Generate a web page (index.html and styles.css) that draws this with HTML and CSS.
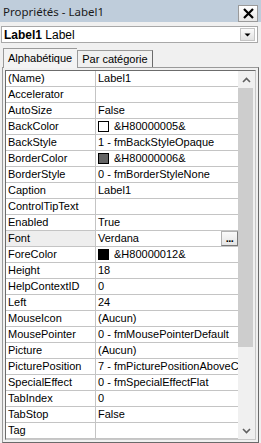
FILE: index.html
```html
<!DOCTYPE html>
<html>
<head>
<meta charset="utf-8">
<link rel="stylesheet" href="styles.css">
</head>
<body>
<div class="titlebar">
  <span class="title">Propriétés - Label1</span>
  <div class="close"><svg width="13" height="13" viewBox="0 0 13 13"><path d="M2 2 L11 11 M11 2 L2 11" stroke="#000" stroke-width="2.2" fill="none"/></svg></div>
</div>
<div class="combo">
  <span class="cb-text"><b>Label1</b> Label</span>
  <div class="cb-btn"><svg width="7" height="4" viewBox="0 0 7 4"><path d="M0.5 0.5 L6.5 0.5 L3.5 3.5 Z" fill="#000"/></svg></div>
</div>
<div class="tabs">
  <div class="tab active">Alphabétique</div>
  <div class="tab">Par catégorie</div>
</div>
<div class="panel">
  <div class="listbox">
    <div class="rows">
      <div class="row"><div class="name">(Name)</div><div class="val">Label1</div></div>
      <div class="row"><div class="name">Accelerator</div><div class="val"></div></div>
      <div class="row"><div class="name">AutoSize</div><div class="val">False</div></div>
      <div class="row"><div class="name">BackColor</div><div class="val"><span class="sw sw-white"></span>&amp;H80000005&amp;</div></div>
      <div class="row"><div class="name">BackStyle</div><div class="val">1 - fmBackStyleOpaque</div></div>
      <div class="row"><div class="name">BorderColor</div><div class="val"><span class="sw sw-gray"></span>&amp;H80000006&amp;</div></div>
      <div class="row"><div class="name">BorderStyle</div><div class="val">0 - fmBorderStyleNone</div></div>
      <div class="row"><div class="name">Caption</div><div class="val">Label1</div></div>
      <div class="row"><div class="name">ControlTipText</div><div class="val"></div></div>
      <div class="row"><div class="name">Enabled</div><div class="val">True</div></div>
      <div class="row selected"><div class="name">Font</div><div class="val val-btn"><span class="vtext">Verdana</span><span class="dots">...</span></div></div>
      <div class="row"><div class="name">ForeColor</div><div class="val"><span class="sw sw-black"></span>&amp;H80000012&amp;</div></div>
      <div class="row"><div class="name">Height</div><div class="val">18</div></div>
      <div class="row"><div class="name">HelpContextID</div><div class="val">0</div></div>
      <div class="row"><div class="name">Left</div><div class="val">24</div></div>
      <div class="row"><div class="name">MouseIcon</div><div class="val">(Aucun)</div></div>
      <div class="row"><div class="name">MousePointer</div><div class="val">0 - fmMousePointerDefault</div></div>
      <div class="row"><div class="name">Picture</div><div class="val">(Aucun)</div></div>
      <div class="row"><div class="name">PicturePosition</div><div class="val">7 - fmPicturePositionAboveCenter</div></div>
      <div class="row"><div class="name">SpecialEffect</div><div class="val">0 - fmSpecialEffectFlat</div></div>
      <div class="row"><div class="name">TabIndex</div><div class="val">0</div></div>
      <div class="row"><div class="name">TabStop</div><div class="val">False</div></div>
      <div class="row"><div class="name">Tag</div><div class="val"></div></div>
    </div>
    <div class="scrollbar">
      <div class="sb-btn"><svg width="9" height="6" viewBox="0 0 9 6"><path d="M1 5 L4.5 1.5 L8 5" stroke="#606060" stroke-width="1.6" fill="none"/></svg></div>
      <div class="thumb"></div>
      <div class="track"></div>
      <div class="sb-btn"><svg width="9" height="6" viewBox="0 0 9 6"><path d="M1 1 L4.5 4.5 L8 1" stroke="#606060" stroke-width="1.6" fill="none"/></svg></div>
    </div>
  </div>
</div>
</body>
</html>
```
FILE: styles.css
```css
* { box-sizing: border-box; }
html, body { margin: 0; padding: 0; }
body {
  width: 261px;
  height: 443px;
  overflow: hidden;
  background: #f0f0f0;
  font-family: "Liberation Sans", Arial, sans-serif;
  font-size: 11px;
  color: #000;
}
.titlebar {
  height: 22px;
  background: #bfcddb;
  display: flex;
  align-items: center;
  padding-left: 3px;
}
.title {
  flex: 1;
  font-family: "Noto Sans", sans-serif;
  font-size: 11.5px;
  color: #1a1a1a;
}
.close {
  width: 20px;
  height: 17px;
  margin-right: 3px;
  margin-top: 4px;
  background: linear-gradient(#ffffff, #e6e6e6);
  border: 1px solid #9a9a9a;
  display: flex;
  align-items: center;
  justify-content: center;
}
.combo {
  margin: 4px 3px 0 1px;
  height: 17px;
  background: #fff;
  border: 1px solid #a8a8a8;
  display: flex;
  align-items: center;
}
.cb-text {
  flex: 1;
  padding-left: 2px;
  font-size: 12px;
  white-space: nowrap;
}
.cb-btn {
  width: 15px;
  height: 13px;
  margin-right: 2px;
  border: 1px solid #c4c4c4;
  background: linear-gradient(#fbfbfb, #e2e2e2);
  display: flex;
  align-items: center;
  justify-content: center;
}
.tabs {
  display: flex;
  align-items: flex-end;
  height: 20px;
  margin-top: 4px;
  padding-left: 3px;
  position: relative;
  z-index: 1;
}
.tab {
  height: 17px;
  padding: 0 4px;
  border: 1px solid #9a9a9a;
  border-bottom: none;
  border-right-color: #6a6a6a;
  background: #f0f0f0;
  display: flex;
  align-items: center;
  font-size: 11px;
  white-space: nowrap;
}
.tab.active {
  height: 20px;
  margin-bottom: -1px;
  padding: 0 5px 2px 4px;
  border-right: none;
  background: #f3f3f3;
}
.panel {
  margin-left: 2px;
  width: 257px;
  height: 376px;
  border: 1px solid #9a9a9a;
  border-right-color: #6a6a6a;
  border-bottom-color: #6a6a6a;
  padding: 2px;
}
.listbox {
  height: 100%;
  display: flex;
  border: 1px solid #6c6c6c;
  border-right-color: #c8c8c8;
  border-bottom-color: #c8c8c8;
  background: #fff;
  overflow: hidden;
}
.rows {
  width: 232px;
  overflow: hidden;
}
.row {
  display: grid;
  grid-template-columns: 90px 1fr;
  height: 16px;
  border-bottom: 1px solid #c4c4c4;
  line-height: 15px;
}
.name {
  padding-left: 2px;
  border-right: 1px solid #c4c4c4;
  white-space: nowrap;
  overflow: hidden;
}
.row.selected .name {
  background: #eeeeee;
}
.val {
  padding-left: 2px;
  white-space: nowrap;
  overflow: hidden;
  display: flex;
  align-items: center;
}
.val-btn {
  padding-right: 0;
}
.vtext { flex: 1; }
.dots {
  width: 17px;
  height: 15px;
  border: 1px solid #b0b0b0;
  border-right-color: #7a7a7a;
  border-bottom-color: #7a7a7a;
  background: linear-gradient(#fafafa, #e4e4e4);
  font-weight: bold;
  font-size: 11px;
  line-height: 11px;
  display: flex;
  align-items: center;
  justify-content: center;
  letter-spacing: -0.5px;
}
.sw {
  width: 11px;
  height: 11px;
  border: 1px solid #000;
  margin-right: 5px;
  flex: none;
}
.sw-white { background: #fff; }
.sw-gray { background: #646464; }
.sw-black { background: #000; }
.scrollbar {
  width: 17px;
  display: flex;
  flex-direction: column;
  background: #f0f0f0;
}
.sb-btn {
  height: 17px;
  display: flex;
  align-items: center;
  justify-content: center;
  background: #f0f0f0;
}
.thumb {
  height: 259px;
  margin: 0 2px 0 0;
  background: #cdcdcd;
}
.track {
  flex: 1;
}
```
